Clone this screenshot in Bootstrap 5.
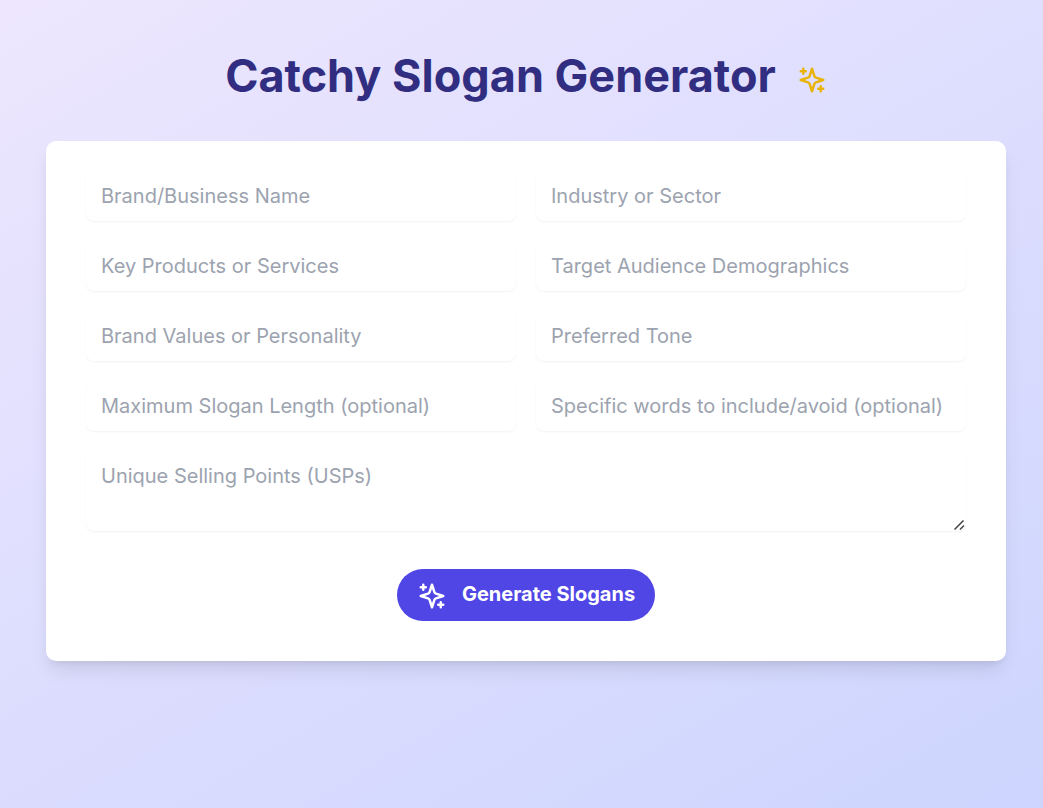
<!DOCTYPE html>
<html lang="en">
<head>
<meta charset="utf-8">
<meta name="viewport" content="width=device-width, initial-scale=1">
<title>Catchy Slogan Generator</title>
<link href="https://cdn.jsdelivr.net/npm/bootstrap@5.3.0/dist/css/bootstrap.min.css" rel="stylesheet">
<style>
  body { font-family: Inter, sans-serif; background: linear-gradient(150deg, #ede6fe, #cdd5fe); padding: 40px 37px 40px 46px; }
  .page-title { font-size: 45px; line-height: 50px; font-weight: 700; color: #312e81; margin: 11px 0 40px; gap: 21px; }
  .title-icon { color: #eab308; margin-top: 8px; }
  .slogan-card { border: 0; border-radius: 10px; padding: 30px 40px 40px; background: #fff; box-shadow: 0 12px 19px -4px rgba(0,0,0,.1), 0 5px 8px -5px rgba(0,0,0,.1); }
  .field-grid { --bs-gutter-x: 20px; --bs-gutter-y: 20px; }
  .slogan-card .form-control { font-size: 20px; line-height: 30px; padding: 10px 15px; border: 0; border-radius: 8px; box-shadow: 0 1px 2px rgba(0,0,0,.05); }
  .slogan-card .form-control::placeholder { color: #9ca3af; }
  .slogan-card textarea { height: 80px; }
  .slogan-card textarea::-webkit-resizer { background: url("data:image/svg+xml,%3Csvg xmlns='http://www.w3.org/2000/svg' width='15' height='15' fill='none' stroke='%23444' stroke-width='1.5'%3E%3Cpath d='M3.5 13.5l9-9M9 13.5l4-4'/%3E%3C/svg%3E") no-repeat right bottom; }
  .btn-generate { --bs-btn-color: #fff; --bs-btn-bg: #4f46e5; --bs-btn-hover-color: #fff; --bs-btn-hover-bg: #4338ca; font-size: 20px; line-height: 30px; font-weight: 700; padding: 10px 20px 12px; border: 0; gap: 15px; margin-top: 38px; }
  .btn-generate svg { margin-top: 2px; margin-bottom: -2px; }
</style>
</head>
<body class="min-vh-100">
<svg class="d-none" aria-hidden="true">
  <symbol id="sparkles" viewBox="0 0 24 24" fill="none" stroke="currentColor" stroke-width="2" stroke-linecap="round" stroke-linejoin="round">
    <path d="m12 3-1.912 5.813a2 2 0 0 1-1.275 1.275L3 12l5.813 1.912a2 2 0 0 1 1.275 1.275L12 21l1.912-5.813a2 2 0 0 1 1.275-1.275L21 12l-5.813-1.912a2 2 0 0 1-1.275-1.275L12 3ZM5 3v4M19 17v4M3 5h4M17 19h4"/>
  </symbol>
</svg>
<main>
  <h1 class="page-title d-flex justify-content-center align-items-center">Catchy Slogan Generator
    <svg class="title-icon" width="30" height="30" aria-hidden="true"><use href="#sparkles"/></svg></h1>
  <form class="slogan-card">
    <div class="row field-grid">
      <div class="col-6"><input class="form-control" type="text" aria-label="Brand/Business Name" placeholder="Brand/Business Name"></div>
      <div class="col-6"><input class="form-control" type="text" aria-label="Industry or Sector" placeholder="Industry or Sector"></div>
      <div class="col-6"><input class="form-control" type="text" aria-label="Key Products or Services" placeholder="Key Products or Services"></div>
      <div class="col-6"><input class="form-control" type="text" aria-label="Target Audience Demographics" placeholder="Target Audience Demographics"></div>
      <div class="col-6"><input class="form-control" type="text" aria-label="Brand Values or Personality" placeholder="Brand Values or Personality"></div>
      <div class="col-6"><input class="form-control" type="text" aria-label="Preferred Tone" placeholder="Preferred Tone"></div>
      <div class="col-6"><input class="form-control" type="text" aria-label="Maximum Slogan Length (optional)" placeholder="Maximum Slogan Length (optional)"></div>
      <div class="col-6"><input class="form-control" type="text" aria-label="Specific words to include/avoid (optional)" placeholder="Specific words to include/avoid (optional)"></div>
      <div class="col-12"><textarea class="form-control" aria-label="Unique Selling Points (USPs)" placeholder="Unique Selling Points (USPs)"></textarea></div>
    </div>
    <div class="d-flex justify-content-center"><button type="button" class="btn btn-generate rounded-pill d-inline-flex align-items-center">
      <svg width="30" height="30" aria-hidden="true"><use href="#sparkles"/></svg>Generate Slogans</button></div>
  </form>
</main>
<script src="https://cdn.jsdelivr.net/npm/bootstrap@5.3.0/dist/js/bootstrap.bundle.min.js"></script>
</body>
</html>
